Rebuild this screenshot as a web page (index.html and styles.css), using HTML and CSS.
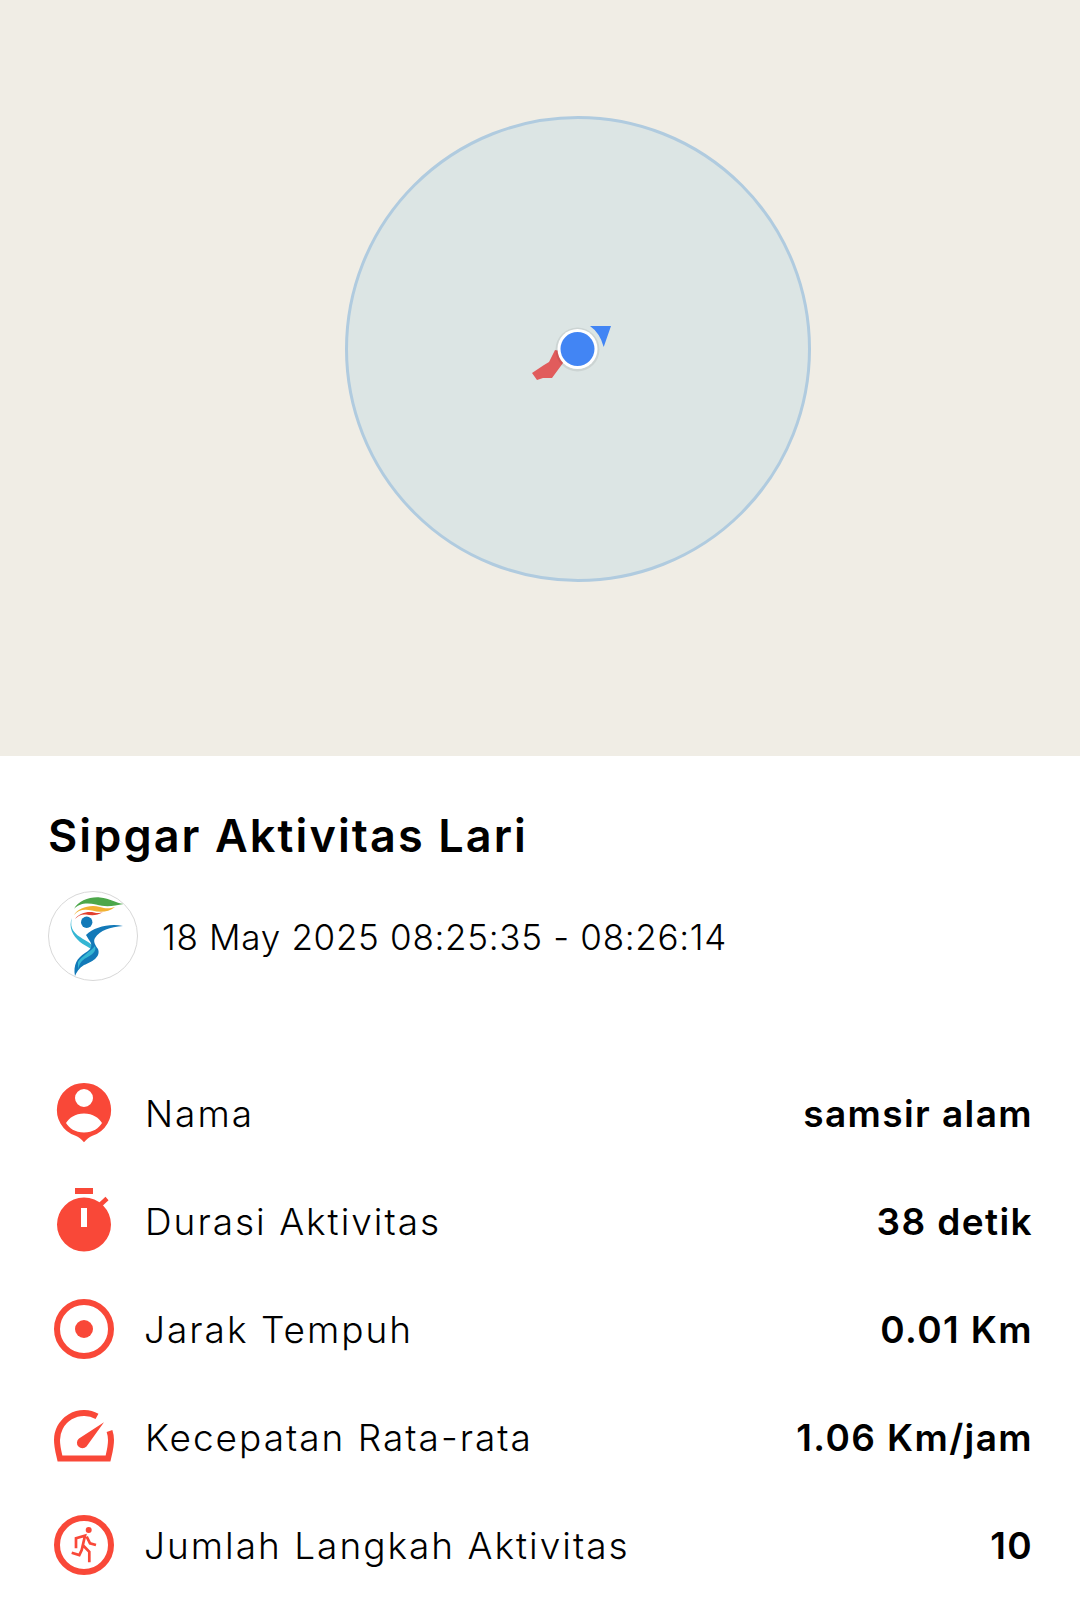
FILE: index.html
```html
<!DOCTYPE html>
<html lang="id">
<head>
<meta charset="utf-8">
<title>Sipgar Aktivitas Lari</title>
<link rel="stylesheet" href="styles.css">
</head>
<body>
<section class="map">
  <svg class="map-art" viewBox="0 0 1080 756" aria-hidden="true">
    <circle cx="578" cy="349" r="231.500" fill="#dce5e4" stroke="#b0cbdf" stroke-width="3"/>
    <path d="M532 373 L544 365 L549 362 L555 350 L566 352 L563 363 L552 378 L543 378 L537 380Z" fill="#e15c5c"/>
    <path d="M590 326 H611 L603.700 347 Q600 333 590 326Z" fill="#4285f4"/>
    <circle cx="577.500" cy="349.500" r="22" fill="#000" opacity="0.07"/>
    <circle cx="577.500" cy="349" r="20" fill="#fff"/>
    <circle cx="577.500" cy="349" r="17" fill="#4285f4"/>
  </svg>
</section>
<main class="panel">
  <h1 class="title">Sipgar Aktivitas Lari</h1>
  <div class="meta">
    <svg class="logo" viewBox="0 0 90 90" aria-hidden="true">
      <circle cx="45" cy="45" r="44.500" fill="#fff" stroke="#d8d8d8"/>
      <path d="M26 18 C30 10 42 5.500 52 6.500 C62 7.500 68 12 75.500 13 C66 15 58 16.500 48 13.500 C38 11 30 13 26 18Z" fill="#4ca74a"/>
      <path d="M26 24 C30 17 42 13 52 16 C58 18 62 17.500 67 16 C60 21.500 52 21.500 44 19.500 C36 17.500 30 19 26 24Z" fill="#f1b133"/>
      <path d="M27 28 C31 22 40 20 46 21.500 C50 22.500 52 22 55 21 C49 25 43 24.500 38 23.500 C33 23 30 25 27 28Z" fill="#e2402f"/>
      <circle cx="38.700" cy="31.300" r="5.700" fill="#1279b8"/>
      <path d="M24 27 C21 38 27 43 35 48 C42 52 49 56 49 64 C47 58 38 56 32 51 C25 45 20 36 24 27Z" fill="#35b6d3"/>
      <path d="M38 44 C46 36 62 32 75 35 C62 36 52 39 47 47 C45 50 47 54 50 58 C53 66 44 71 36 74 C31 77 28 82 27 85 C25 74 29 67 37 62 C44 58 45 54 41 49Z" fill="#1279b8"/>
      <path d="M30 71 C34 65 42 61 47 55 C49 60 44 64 38 67 C34 69 31 73 30 79Z" fill="#35b6d3"/>
    </svg>
    <span class="date">18 May 2025 08:25:35 - 08:26:14</span>
  </div>
  <ul class="stats">
    <li class="row">
      <span class="icon"><svg viewBox="0 0 60 60" aria-hidden="true"><path fill-rule="evenodd" d="M30 0 A27 27 0 0 1 39 52.500 C35 54 33 56 30 59.300 C27 56 25 54 21 52.500 A27 27 0 0 1 30 0Z M30 6 A9 9 0 1 0 30 24 A9 9 0 1 0 30 6Z M30 30.500 C21 30.500 15 35 12 40 C15 45 21 49.500 30 49.500 C39 49.500 45 45 48 40 C45 35 39 30.500 30 30.500Z" fill="#f94838"/></svg></span>
      <span class="label">Nama</span><span class="value">samsir alam</span>
    </li>
    <li class="row">
      <span class="icon"><svg viewBox="0 0 60 60" aria-hidden="true"><path d="M21 -3 H39 V3 H21Z" fill="#f94838"/><path d="M46 14 L53 7.500" stroke="#f94838" stroke-width="4.500" fill="none"/><path fill-rule="evenodd" d="M30 6.500 A27 27 0 1 1 30 60.500 A27 27 0 1 1 30 6.500Z M27 17 V36 H33 V17Z" fill="#f94838"/></svg></span>
      <span class="label">Durasi Aktivitas</span><span class="value">38 detik</span>
    </li>
    <li class="row">
      <span class="icon"><svg viewBox="0 0 60 60" aria-hidden="true"><circle cx="30" cy="30" r="27" fill="none" stroke="#f94838" stroke-width="6"/><circle cx="30" cy="30" r="9" fill="#f94838"/></svg></span>
      <span class="label label-tight">Jarak Tempuh</span><span class="value">0.01 Km</span>
    </li>
    <li class="row">
      <span class="icon"><svg viewBox="0 0 60 60" aria-hidden="true"><path d="M43 9.300 A27 27 0 0 0 3 33 C3 40 4.500 45 6 51.500 H54 C55.500 45 57 40 57 33 C57 30 56.500 27 55.500 24" fill="none" stroke="#f94838" stroke-width="6"/><path d="M50 15.300 L32.500 39.500 A5.500 5.500 0 1 1 25 31.500Z" fill="#f94838"/></svg></span>
      <span class="label">Kecepatan Rata-rata</span><span class="value">1.06 Km/jam</span>
    </li>
    <li class="row">
      <span class="icon"><svg viewBox="0 0 60 60" aria-hidden="true"><circle cx="30" cy="30" r="27" fill="none" stroke="#f94838" stroke-width="6"/><circle cx="34.700" cy="15" r="3" fill="#f94838"/><path d="M22 33.300 V23.300 L31 20.700 L27.700 35 L25.300 40 L17.700 37.700 M28.700 30 L35.300 36.700 V47.300 M32.700 21.700 L36 28.300 L42 30" fill="none" stroke="#f94838" stroke-width="2.700"/></svg></span>
      <span class="label label-tight">Jumlah Langkah Aktivitas</span><span class="value">10</span>
    </li>
  </ul>
</main>
</body>
</html>
```
FILE: styles.css
```css
* { box-sizing: border-box; }
html, body { margin: 0; padding: 0; }
body {
  width: 1080px;
  height: 1598px;
  overflow: hidden;
  background: #fff;
  color: #000;
  font-family: Inter, "Open Sans", "Liberation Sans", sans-serif;
}
.map { height: 756px; background: #f0ede5; }
.map-art { display: block; width: 1080px; height: 756px; }
.panel { padding: 52px 47px 0 48px; }
.title {
  margin: 0;
  font-size: 45px;
  line-height: 56px;
  font-weight: 600;
  letter-spacing: 2.1px;
}
.meta { display: flex; align-items: center; gap: 24px; margin-top: 27px; }
.logo { width: 90px; height: 90px; flex: none; }
.date { padding-top: 2px; font-size: 35px; font-weight: 300; letter-spacing: 0.7px; }
.stats { list-style: none; margin: 102px 0 0; padding: 0; display: flex; flex-direction: column; gap: 48px; }
.row { display: flex; align-items: center; height: 60px; }
.icon { width: 72px; flex: none; display: flex; justify-content: center; }
.icon svg { width: 60px; height: 60px; overflow: visible; display: block; }
.label { margin-left: 25px; padding-top: 1px; font-size: 37px; font-weight: 300; letter-spacing: 2px; }
.label-tight { margin-left: 24px; }
.value { margin-left: auto; padding-top: 1px; font-size: 37px; font-weight: 600; letter-spacing: 1.4px; }
```
